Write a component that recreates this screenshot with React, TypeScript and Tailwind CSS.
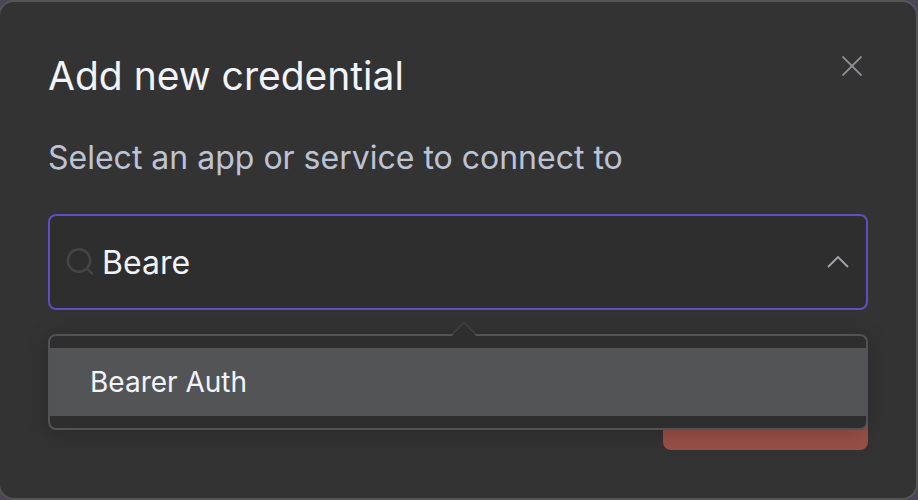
import { useState } from 'react';

const services = ['Bearer Auth'];

const SearchIcon = () => (
  <svg className="w-7 h-7 shrink-0 text-[#444545]" viewBox="0 0 28 28" fill="none" stroke="currentColor" strokeWidth="2.4" strokeLinecap="round" aria-hidden="true">
    <circle cx="13" cy="12.5" r="11.2" />
    <path d="M21.5 21l4.5 4.7" />
  </svg>
);

const ChevronUpIcon = () => (
  <svg className="w-6 h-6" viewBox="0 0 24 24" fill="none" stroke="currentColor" strokeWidth="1.8" aria-hidden="true">
    <path d="M2 17L12 7l10 10" />
  </svg>
);

const CloseIcon = () => (
  <svg className="w-5 h-5" viewBox="0 0 20 20" fill="none" stroke="currentColor" strokeWidth="1.8" aria-hidden="true">
    <path d="M0.5 0.5l19 19M19.5 0.5l-19 19" />
  </svg>
);

export default function App() {
  const [query, setQuery] = useState('Beare');
  const [open, setOpen] = useState(true);

  const matches = services.filter((name) => name.toLowerCase().includes(query.toLowerCase()));

  return (
    <div className="min-h-screen overflow-hidden bg-[#4a4658] font-['Inter',sans-serif]">
      <div
        role="dialog"
        aria-labelledby="dialog-title"
        className="relative -ml-0.5 rounded-2xl border-2 border-[#555555] bg-[#333333] px-12 pt-12 pb-12"
      >
        <h1 id="dialog-title" className="text-[39px] leading-[52px] font-normal text-[#f2f4fc]">
          Add new credential
        </h1>
        <button type="button" aria-label="Close" className="absolute top-[54px] right-[54px] text-[#909298]">
          <CloseIcon />
        </button>

        <label htmlFor="service" className="mt-8 block text-[32px] leading-[48px] text-[#bec3d4]">
          Select an app or service to connect to
        </label>

        <div className="relative mt-8">
          <div className="flex h-24 items-center gap-2 rounded-lg border-2 border-[#5e4fc0] bg-[#2e2e2e] px-4">
            <SearchIcon />
            <input
              id="service"
              type="text"
              value={query}
              onChange={(e) => setQuery(e.target.value)}
              className="min-w-0 flex-1 bg-transparent pt-0.5 text-[32px] leading-[48px] text-[#f2f4fc] outline-none"
            />
            <button type="button" aria-label="Toggle list" onClick={() => setOpen(!open)} className="text-[#a3a6ae]">
              <ChevronUpIcon />
            </button>
          </div>

          {open && (
            <div className="absolute inset-x-0 top-full z-10 mt-6 rounded-lg border-2 border-[#525356] bg-[#2e2e2e] py-3 shadow-[0_4px_24px_rgba(0,0,0,0.2)]">
              {/* Arrow */}
              <svg className="absolute -top-3.5 left-[402px] h-3.5 w-6" viewBox="0 0 24 14" aria-hidden="true">
                <path d="M0 14L12 1l12 13z" fill="#2e2e2e" />
                <path d="M0 12.5L12 0.8 24 12.5" fill="none" stroke="#444444" strokeWidth="1.2" />
              </svg>
              <ul role="listbox" aria-label="Services">
                {matches.map((name) => (
                  <li key={name} role="option" aria-selected="true" className="bg-[#535456] px-10 text-[28px] leading-[68px] text-[#f2f4fc]">
                    {name}
                  </li>
                ))}
              </ul>
            </div>
          )}
        </div>

        <div className="mt-[60px] flex justify-end">
          <button type="button" aria-label="Continue" disabled className="h-20 w-[205px] rounded-lg bg-[#995047]" />
        </div>
      </div>
    </div>
  );
}
